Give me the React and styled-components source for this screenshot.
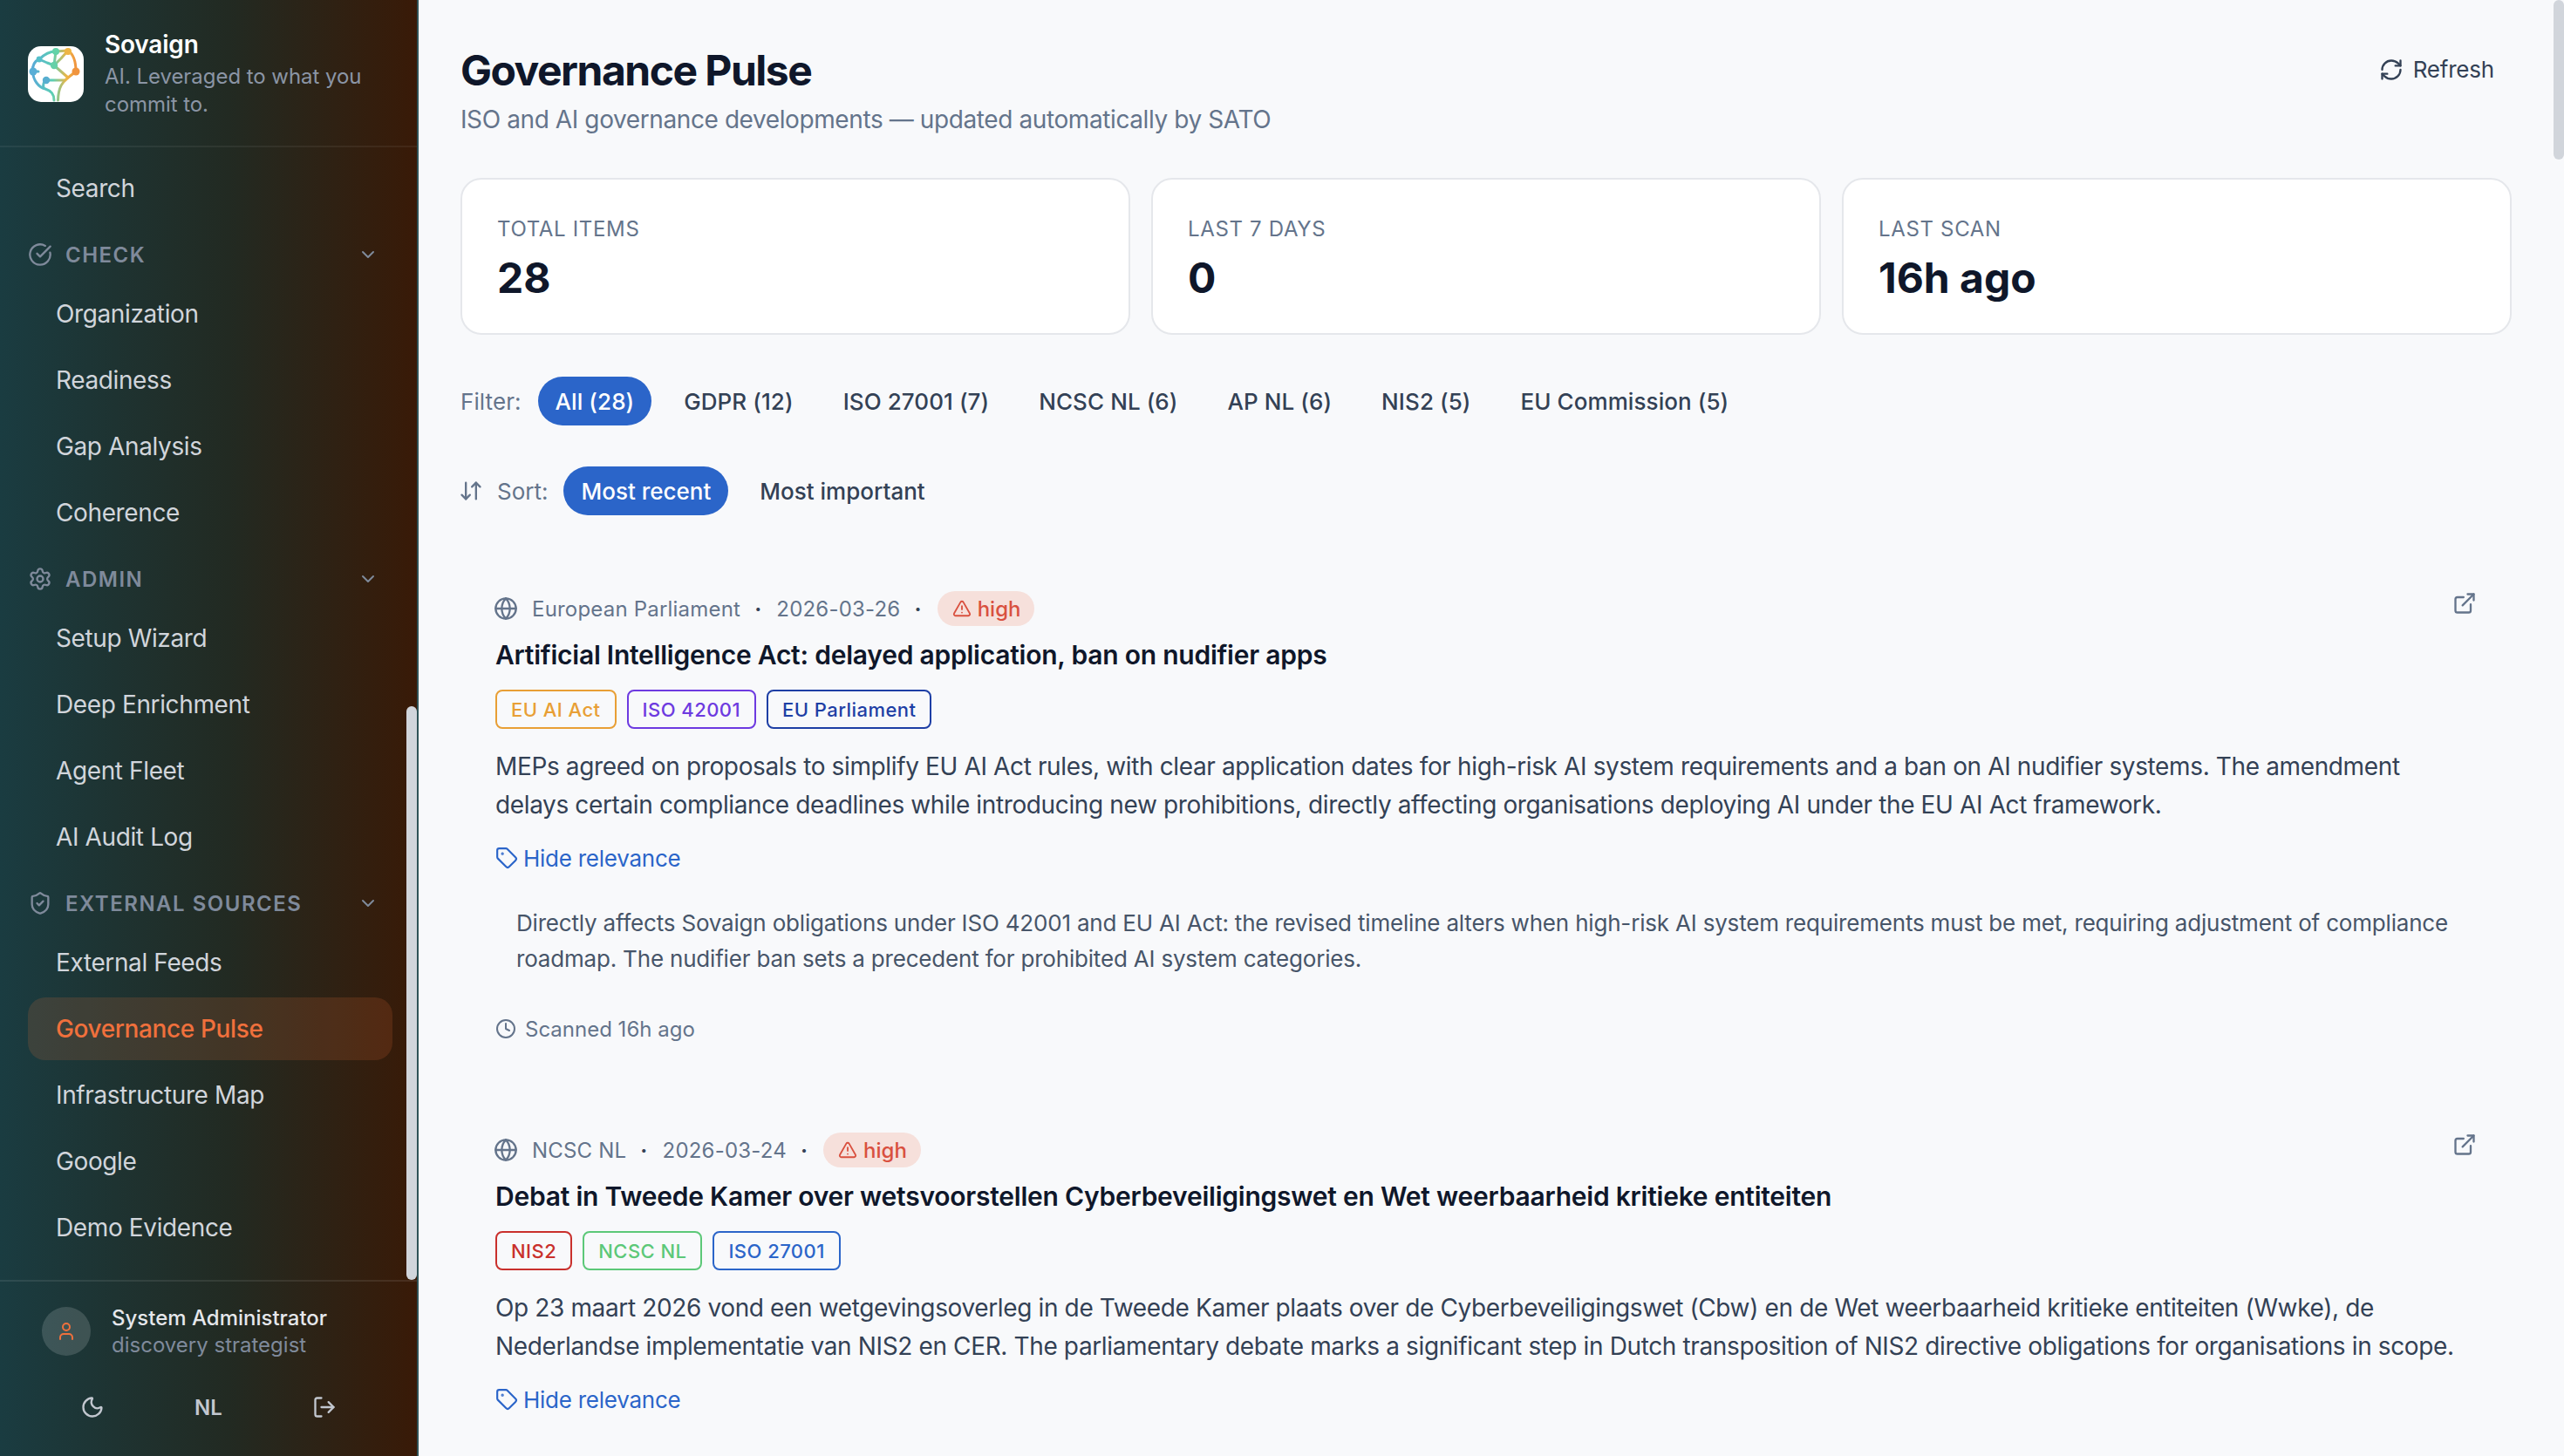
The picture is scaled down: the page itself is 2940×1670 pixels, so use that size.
import styled, { createGlobalStyle } from "styled-components";
import {
  ArrowDownUp,
  ChevronDown,
  CircleCheckBig,
  Clock,
  ExternalLink,
  Globe,
  LogOut,
  Moon,
  RefreshCw,
  Settings,
  ShieldCheck,
  Tag,
  TriangleAlert,
  User,
} from "lucide-react";

const GlobalStyle = createGlobalStyle`
  html, body {
    margin: 0;
    padding: 0;
    height: 100%;
    overflow: hidden;
    background: #f8f9fb;
    font-family: Inter, "Noto Sans", sans-serif;
  }
  * { box-sizing: border-box; }
`;

const Shell = styled.div`
  display: flex;
  width: 100%;
  height: 100vh;
  overflow: hidden;
`;

/* sidebar */
const Sidebar = styled.aside`
  position: relative;
  flex: 0 0 480px;
  display: flex;
  flex-direction: column;
  height: 100%;
  background: linear-gradient(to right, #1a3c41 0%, #222a22 55%, #391a07 100%);
  border-right: 2px solid #2f5357;
`;

const Brand = styled.div`
  flex: 0 0 169px;
  display: flex;
  align-items: center;
  gap: 24px;
  padding: 2px 32px 0;
  border-bottom: 2px solid rgba(255, 255, 255, 0.06);

  svg {
    flex: 0 0 64px;
  }
`;

const BrandName = styled.div`
  font-size: 28px;
  font-weight: 600;
  line-height: 36px;
  letter-spacing: -0.2px;
  color: #fff;
`;

const BrandTag = styled.div`
  margin-top: 3px;
  font-size: 24px;
  line-height: 32px;
  letter-spacing: -0.05px;
  color: #8b95a5;
`;

const Nav = styled.nav`
  flex: 1;
  display: flex;
  flex-direction: column;
  gap: 4px;
  padding: 11px 32px 0;
  overflow: hidden;
`;

const NavItem = styled.div`
  flex: 0 0 72px;
  display: flex;
  align-items: center;
  padding-left: 32px;
  margin-right: -4px;
  border-radius: 20px;
  font-size: 28px;
  letter-spacing: -0.38px;
  color: ${(p) => (p.$active ? "#f0703c" : "#d1d5db")};
  font-weight: ${(p) => (p.$active ? 500 : 400)};
  background: ${(p) => (p.$active ? "rgba(255, 122, 60, 0.15)" : "transparent")};
`;

const GroupHead = styled.div`
  flex: 0 0 64px;
  display: flex;
  align-items: center;
  gap: 15px;
  padding: 8px 12px 0 0;
  font-size: 24px;
  font-weight: 600;
  letter-spacing: 1.5px;
  color: #7f8a9b;

  span {
    flex: 1;
  }
`;

const Thumb = styled.div`
  position: absolute;
  right: 0;
  top: 810px;
  width: 12px;
  height: 658px;
  border-radius: 6px;
  background: #d1d5db;
`;

const Foot = styled.div`
  flex: 0 0 202px;
  padding: 26px 40px 0 48px;
  border-top: 2px solid rgba(255, 255, 255, 0.09);
`;

const UserRow = styled.div`
  display: flex;
  align-items: center;
  gap: 24px;
`;

const Avatar = styled.div`
  flex: 0 0 56px;
  height: 56px;
  display: flex;
  align-items: center;
  justify-content: center;
  border-radius: 50%;
  background: rgba(255, 255, 255, 0.15);
  color: #f0703c;
`;

const UserName = styled.div`
  font-size: 24px;
  font-weight: 500;
  line-height: 31px;
  color: #e5e7eb;
`;

const UserRole = styled.div`
  font-size: 24px;
  line-height: 31px;
  color: #7f8a9b;
`;

const FootActions = styled.div`
  display: flex;
  margin: 24px 0 0 -8px;
`;

const FootButton = styled.div`
  flex: 1;
  height: 64px;
  display: flex;
  align-items: center;
  justify-content: center;
  font-size: 24px;
  font-weight: 600;
  color: #c2c7cf;
`;

/* main column */
const Main = styled.main`
  position: relative;
  flex: 1;
  min-width: 0;
  height: 100%;
  padding: 50px 60px 0 48px;
  overflow: hidden;
  background: #f8f9fb;
`;

const PageThumb = styled.div`
  position: absolute;
  right: 0;
  top: 0;
  width: 12px;
  height: 183px;
  border-radius: 6px;
  background: #d1d5db;
`;

const PageHead = styled.header`
  display: flex;
  justify-content: space-between;
  align-items: flex-start;
`;

const Title = styled.h1`
  margin: 0;
  font-size: 48px;
  line-height: 62px;
  font-weight: 700;
  letter-spacing: -1.5px;
  color: #0f172a;
`;

const Subtitle = styled.p`
  margin: 5px 0 0;
  font-size: 28px;
  line-height: 40px;
  letter-spacing: -0.4px;
  color: #64748b;
`;

const RefreshButton = styled.div`
  display: flex;
  align-items: center;
  gap: 11px;
  margin: 10px 20px 0 0;
  font-size: 26px;
  line-height: 40px;
  letter-spacing: -0.2px;
  color: #334155;
`;

const Stats = styled.section`
  display: grid;
  grid-template-columns: repeat(3, 1fr);
  gap: 24px;
  margin-top: 47px;
`;

const StatCard = styled.div`
  height: 180px;
  padding: 41px 40px 0;
  background: #fff;
  border: 2px solid #e5e7eb;
  border-radius: 24px;
`;

const StatLabel = styled.div`
  font-size: 24px;
  line-height: 32px;
  letter-spacing: 0.66px;
  color: #64748b;
`;

const StatValue = styled.div`
  margin-top: 10px;
  font-size: 48px;
  line-height: 60px;
  font-weight: 700;
  color: #0f172a;
`;

const PillRow = styled.div`
  display: flex;
  align-items: center;
  gap: ${(p) => p.$gap || 16}px;
  margin-top: ${(p) => p.$top}px;
  letter-spacing: ${(p) => p.$track || 0}px;
`;

const RowLabel = styled.span`
  display: flex;
  align-items: center;
  gap: 16px;
  margin-right: 2px;
  font-size: 26px;
  color: #64748b;

  svg {
    margin-left: -2px;
  }
`;

const Pill = styled.div`
  height: 56px;
  display: flex;
  align-items: center;
  padding: 0 20px;
  border-radius: 28px;
  font-size: 26px;
  font-weight: 500;
  color: ${(p) => (p.$on ? "#fff" : "#334155")};
  background: ${(p) => (p.$on ? "#2b65c9" : "transparent")};
`;

/* news items */
const Article = styled.article`
  position: relative;
  padding: 0 40px;
  margin-top: ${(p) => p.$top}px;
`;

const OpenLink = styled.div`
  position: absolute;
  right: 40px;
  top: 0;
  color: #64748b;
`;

const Meta = styled.div`
  display: flex;
  align-items: center;
  height: 40px;
  font-size: 24px;
  letter-spacing: 0.2px;
  color: #64748b;

  > svg {
    margin: 0 16px 0 -2px;
  }
`;

const Dot = styled.span`
  margin: 0 ${(p) => p.$side || 17}px 0 16px;
  font-weight: 700;
  color: #334155;
`;

const Severity = styled.span`
  display: flex;
  align-items: center;
  height: 40px;
  padding: 0 16px 0 17px;
  border-radius: 20px;
  font-weight: 500;
  letter-spacing: 0;
  color: #d9503f;
  background: #f6e0db;

  svg {
    margin-right: 7px;
  }
`;

const ItemTitle = styled.h2`
  margin: 9px 0 0;
  font-size: 30px;
  line-height: 48px;
  font-weight: 600;
  letter-spacing: -0.23px;
  color: #0f172a;
`;

const TagRow = styled.div`
  display: flex;
  gap: 12px;
  margin-top: 16px;
`;

const Chip = styled.span`
  height: 45px;
  display: flex;
  align-items: center;
  padding: 0 16px;
  border: 2px solid ${(p) => p.$color};
  border-radius: 8px;
  font-size: 22px;
  font-weight: 500;
  letter-spacing: 0.45px;
  color: ${(p) => p.$color};
`;

const Body = styled.p`
  margin: 22px 0 0;
  font-size: 28px;
  line-height: 43.5px;
  letter-spacing: -0.37px;
  color: #334155;
`;

const Toggle = styled.div`
  display: flex;
  align-items: center;
  gap: 6px;
  height: 40px;
  margin-top: 19px;
  font-size: 26px;
  letter-spacing: -0.25px;
  color: #2b65c9;
`;

const Relevance = styled.p`
  margin: 34px 0 0;
  padding-left: 24px;
  font-size: 26px;
  line-height: 41px;
  letter-spacing: -0.19px;
  white-space: nowrap;
  color: #475569;
`;

const Scanned = styled.div`
  display: flex;
  align-items: center;
  gap: 10px;
  height: 40px;
  margin-top: 40px;
  font-size: 24px;
  color: #64748b;
`;

const navTree = [
  { label: "Search" },
  {
    group: "CHECK",
    Icon: CircleCheckBig,
    items: ["Organization", "Readiness", "Gap Analysis", "Coherence"],
  },
  {
    group: "ADMIN",
    Icon: Settings,
    items: ["Setup Wizard", "Deep Enrichment", "Agent Fleet", "AI Audit Log"],
  },
  {
    group: "EXTERNAL SOURCES",
    Icon: ShieldCheck,
    items: ["External Feeds", "Governance Pulse", "Infrastructure Map", "Google", "Demo Evidence"],
  },
];

const stats = [
  ["TOTAL ITEMS", "28"],
  ["LAST 7 DAYS", "0"],
  ["LAST SCAN", "16h ago"],
];

const filters = ["All (28)", "GDPR (12)", "ISO 27001 (7)", "NCSC NL (6)", "AP NL (6)", "NIS2 (5)", "EU Commission (5)"];

const articles = [
  {
    source: "European Parliament",
    date: "2026-03-26",
    title: "Artificial Intelligence Act: delayed application, ban on nudifier apps",
    tags: [
      ["EU AI Act", "#e89f35"],
      ["ISO 42001", "#6d3ae0"],
      ["EU Parliament", "#1e3fa5"],
    ],
    body: [
      "MEPs agreed on proposals to simplify EU AI Act rules, with clear application dates for high-risk AI system requirements and a ban on AI nudifier systems. The amendment",
      "delays certain compliance deadlines while introducing new prohibitions, directly affecting organisations deploying AI under the EU AI Act framework.",
    ],
    relevance: [
      "Directly affects Sovaign obligations under ISO 42001 and EU AI Act: the revised timeline alters when high-risk AI system requirements must be met, requiring adjustment of compliance",
      "roadmap. The nudifier ban sets a precedent for prohibited AI system categories.",
    ],
    scanned: "Scanned 16h ago",
  },
  {
    source: "NCSC NL",
    date: "2026-03-24",
    title: "Debat in Tweede Kamer over wetsvoorstellen Cyberbeveiligingswet en Wet weerbaarheid kritieke entiteiten",
    tags: [
      ["NIS2", "#c9302c"],
      ["NCSC NL", "#5cc878"],
      ["ISO 27001", "#2b65c9"],
    ],
    body: [
      "Op 23 maart 2026 vond een wetgevingsoverleg in de Tweede Kamer plaats over de Cyberbeveiligingswet (Cbw) en de Wet weerbaarheid kritieke entiteiten (Wwke), de",
      "Nederlandse implementatie van NIS2 en CER. The parliamentary debate marks a significant step in Dutch transposition of NIS2 directive obligations for organisations in scope.",
    ],
  },
];

const BrainLogo = () => (
  <svg width="64" height="64" viewBox="0 0 64 64" fill="none">
    <defs>
      <linearGradient id="brainStroke" gradientUnits="userSpaceOnUse" x1="4" y1="0" x2="58" y2="0">
        <stop offset="0" stopColor="#58a8d8" />
        <stop offset="0.45" stopColor="#5ccfb4" />
        <stop offset="0.75" stopColor="#eeb544" />
        <stop offset="1" stopColor="#f08c3e" />
      </linearGradient>
    </defs>
    <rect width="64" height="64" rx="15" fill="#fff" />
    <g stroke="url(#brainStroke)" strokeWidth="3" strokeLinecap="round" strokeLinejoin="round">
      <path d="M30 62C30 54 26 51 20 49C12 47 6 39 5.5 29C5 22 8 17 13 15C18 10 25 6 32 6L46 5C52 9 55 18 55 29L46 36C40 41 35 46 34.5 62" />
      <path d="M13 15L22 19L30 22L46 36M30 22L38 14L46 5M32 6L30 22M6 29H12M21 39H42M21 39C18 41 17 44 18 48" />
    </g>
    <circle cx="32" cy="6" r="4" fill="#62d2a8" />
    <circle cx="46" cy="6" r="4" fill="#eeb544" />
    <circle cx="55" cy="29" r="4.5" fill="#f0943e" />
    <circle cx="30" cy="22" r="4.2" fill="#66d0a8" />
    <circle cx="13" cy="15" r="3.4" fill="#55bfc9" />
    <circle cx="6" cy="29" r="4.5" fill="#58aed6" />
    <circle cx="21" cy="39" r="4.2" fill="#58aed0" />
  </svg>
);

const App = () => {
  return (
    <>
      <GlobalStyle />
      <Shell>
        <Sidebar>
          <Brand>
            <BrainLogo />
            <div>
              <BrandName>Sovaign</BrandName>
              <BrandTag>AI. Leveraged to what you commit to.</BrandTag>
            </div>
          </Brand>
          <Nav>
            {navTree.map((entry) =>
              entry.group ? (
                <NavGroup key={entry.group} {...entry} />
              ) : (
                <NavItem key={entry.label}>{entry.label}</NavItem>
              )
            )}
          </Nav>
          <Thumb />
          <Foot>
            <UserRow>
              <Avatar>
                <User size={24} strokeWidth={2} />
              </Avatar>
              <div>
                <UserName>System Administrator</UserName>
                <UserRole>discovery strategist</UserRole>
              </div>
            </UserRow>
            <FootActions>
              <FootButton>
                <Moon size={28} strokeWidth={2} />
              </FootButton>
              <FootButton>NL</FootButton>
              <FootButton>
                <LogOut size={28} strokeWidth={2} />
              </FootButton>
            </FootActions>
          </Foot>
        </Sidebar>

        <Main>
          <PageThumb />
          <PageHead>
            <div>
              <Title>Governance Pulse</Title>
              <Subtitle>ISO and AI governance developments — updated automatically by SATO</Subtitle>
            </div>
            <RefreshButton>
              <RefreshCw size={28} strokeWidth={2} />
              Refresh
            </RefreshButton>
          </PageHead>

          <Stats>
            {stats.map(([label, value]) => (
              <StatCard key={label}>
                <StatLabel>{label}</StatLabel>
                <StatValue>{value}</StatValue>
              </StatCard>
            ))}
          </Stats>

          <PillRow $top={48} $track={0.08} $gap={17}>
            <RowLabel>Filter:</RowLabel>
            {filters.map((f, i) => (
              <Pill key={f} $on={i === 0}>
                {f}
              </Pill>
            ))}
          </PillRow>

          <PillRow $top={47}>
            <RowLabel>
              <ArrowDownUp size={28} strokeWidth={2} />
              Sort:
            </RowLabel>
            <Pill $on>Most recent</Pill>
            <Pill>Most important</Pill>
          </PillRow>

          {articles.map((a, i) => (
            <NewsItem key={a.source} item={a} top={i === 0 ? 87 : 99} />
          ))}
        </Main>
      </Shell>
    </>
  );
};

const NavGroup = ({ group, Icon, items }) => (
  <>
    <GroupHead>
      <Icon size={28} strokeWidth={2} />
      <span>{group}</span>
      <ChevronDown size={24} strokeWidth={2} />
    </GroupHead>
    {items.map((label) => (
      <NavItem key={label} $active={label === "Governance Pulse"}>
        {label}
      </NavItem>
    ))}
  </>
);

const NewsItem = ({ item, top }) => (
  <Article $top={top}>
    <OpenLink>
      <ExternalLink size={28} strokeWidth={2} />
    </OpenLink>
    <Meta>
      <Globe size={28} strokeWidth={2} />
      {item.source}
      <Dot>·</Dot>
      {item.date}
      <Dot $side={18}>·</Dot>
      <Severity>
        <TriangleAlert size={22} strokeWidth={2} />
        high
      </Severity>
    </Meta>
    <ItemTitle>{item.title}</ItemTitle>
    <TagRow>
      {item.tags.map(([label, color]) => (
        <Chip key={label} $color={color}>
          {label}
        </Chip>
      ))}
    </TagRow>
    <Body>
      {item.body[0]}
      <br />
      {item.body[1]}
    </Body>
    <Toggle>
      <Tag size={26} strokeWidth={2} />
      Hide relevance
    </Toggle>
    {item.relevance && (
      <>
        <Relevance>
          {item.relevance[0]}
          <br />
          {item.relevance[1]}
        </Relevance>
        <Scanned>
          <Clock size={24} strokeWidth={2} />
          {item.scanned}
        </Scanned>
      </>
    )}
  </Article>
);

export default App;
